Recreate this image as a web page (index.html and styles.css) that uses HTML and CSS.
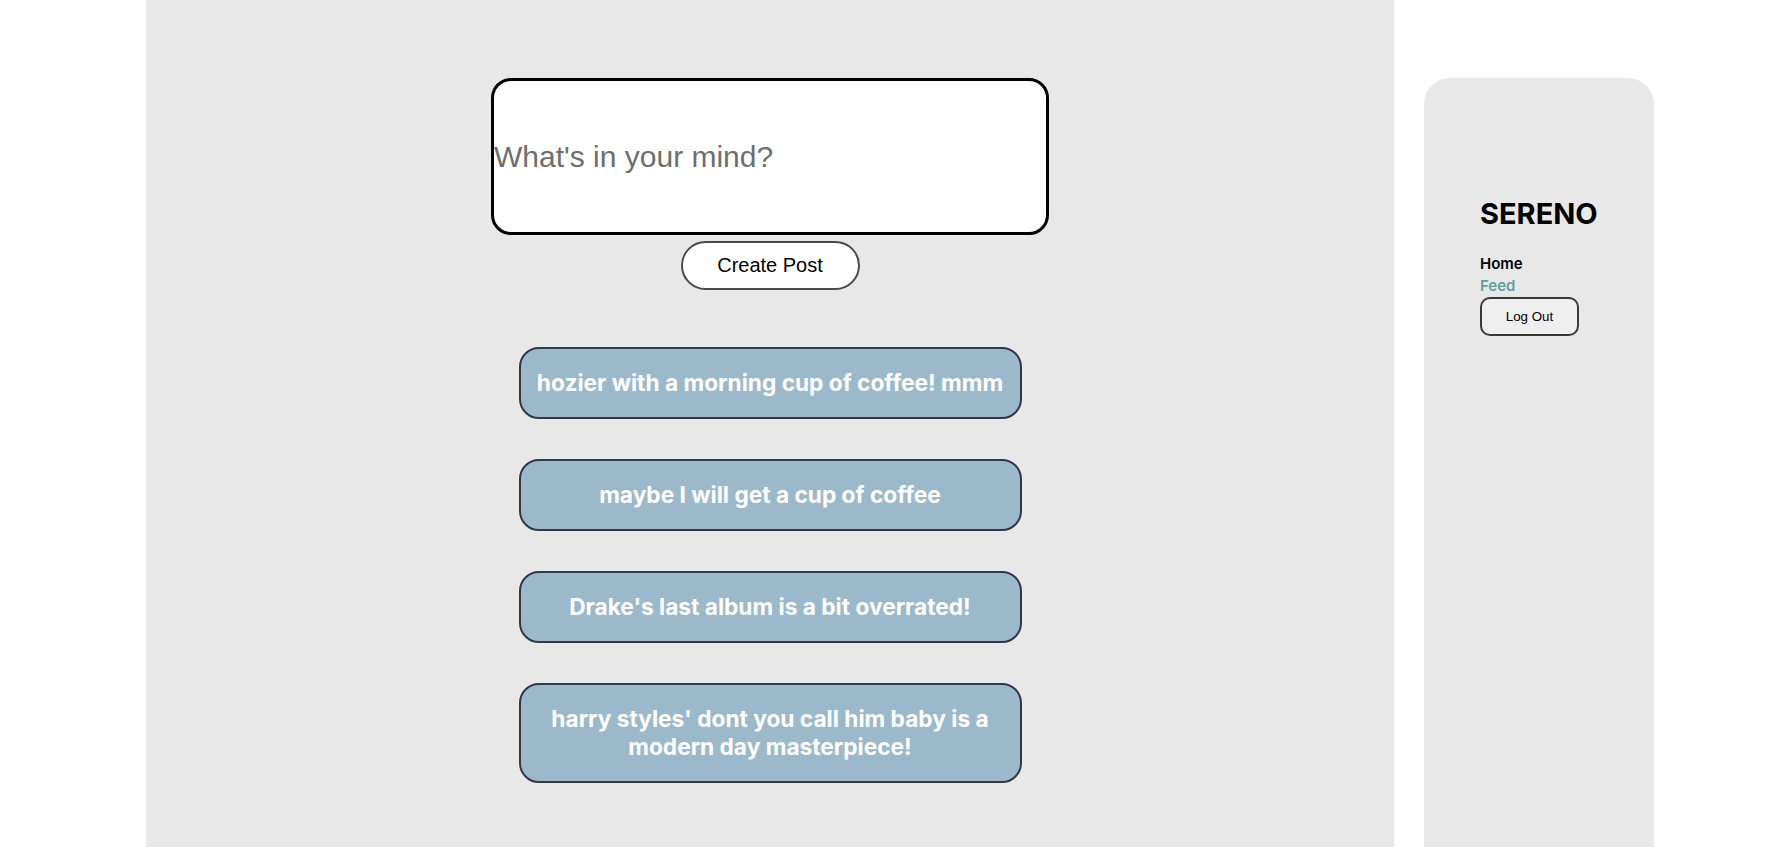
FILE: index.html
```html
<!DOCTYPE html>
<html lang="en">
<head>
<meta charset="utf-8">
<title>Sereno</title>
<link rel="stylesheet" href="styles.css">
</head>
<body>
<div class="page">
  <main class="main">
    <form class="composer">
      <input class="composer-input" type="text" placeholder="What's in your mind?">
      <button class="create-btn" type="button">Create Post</button>
    </form>
    <section class="posts">
      <div class="post">hozier with a morning cup of coffee! mmm</div>
      <div class="post">maybe I will get a cup of coffee</div>
      <div class="post">Drake's last album is a bit overrated!</div>
      <div class="post">harry styles' dont you call him baby is a modern day masterpiece!</div>
    </section>
  </main>
  <aside class="sidebar">
    <h1 class="brand">SERENO</h1>
    <nav class="nav">
      <a class="nav-link" href="#">Home</a>
      <a class="nav-link nav-link-active" href="#">Feed</a>
      <button class="logout-btn" type="button">Log Out</button>
    </nav>
  </aside>
</div>
</body>
</html>
```

FILE: styles.css
```css
html, body {
  margin: 0;
  padding: 0;
  background: #ffffff;
  font-family: Inter, "Liberation Sans", sans-serif;
}

.page {
  display: flex;
  align-items: stretch;
  gap: 30px;
  padding-left: 146px;
  min-height: 100vh;
  box-sizing: border-box;
}

.main {
  width: 1248px;
  flex-shrink: 0;
  background: #e8e8e8;
  display: flex;
  flex-direction: column;
  align-items: center;
  padding-top: 78px;
  padding-bottom: 60px;
  box-sizing: border-box;
}

.composer {
  display: flex;
  flex-direction: column;
  align-items: center;
  gap: 6px;
  margin: 0;
}

.composer-input {
  width: 558px;
  height: 157px;
  box-sizing: border-box;
  border: 3px solid #000000;
  border-radius: 20px;
  background: #ffffff;
  font-family: "Liberation Sans", Arial, sans-serif;
  font-size: 30px;
  padding: 0;
  outline: none;
}

.composer-input::placeholder {
  color: #6e6e6e;
}

.create-btn {
  width: 179px;
  height: 49px;
  box-sizing: border-box;
  border: 2px solid #4a4a4a;
  border-radius: 25px;
  background: #ffffff;
  color: #000000;
  font-family: "Liberation Sans", Arial, sans-serif;
  font-size: 20px;
  padding: 0;
}

.posts {
  display: flex;
  flex-direction: column;
  gap: 40px;
  margin-top: 57px;
}

.post {
  width: 503px;
  box-sizing: border-box;
  background: #9bb9ca;
  border: 2px solid #343649;
  border-radius: 20px;
  color: #ffffff;
  font-weight: 700;
  font-size: 22.7px;
  line-height: 28px;
  text-align: center;
  padding: 20px 10px;
}

.sidebar {
  width: 230px;
  flex-shrink: 0;
  margin-top: 78px;
  background: #e8e8e8;
  border-radius: 26px 26px 0 0;
  padding: 118px 56px 0;
  box-sizing: border-box;
}

.brand {
  margin: 0;
  font-size: 29px;
  font-weight: 700;
  color: #000000;
  line-height: normal;
}

.nav {
  display: flex;
  flex-direction: column;
  align-items: flex-start;
  margin-top: 22px;
}

.nav-link {
  font-size: 15px;
  font-weight: 600;
  line-height: 22px;
  color: #000000;
  text-decoration: none;
}

.nav-link-active {
  color: #5f9ea0;
}

.logout-btn {
  box-sizing: border-box;
  width: 99px;
  height: 39px;
  border: 2px solid #3a3a3a;
  border-radius: 10px;
  background: #efefef;
  color: #000000;
  font-family: "Liberation Sans", Arial, sans-serif;
  font-size: 13.33px;
  padding: 0;
}
```
